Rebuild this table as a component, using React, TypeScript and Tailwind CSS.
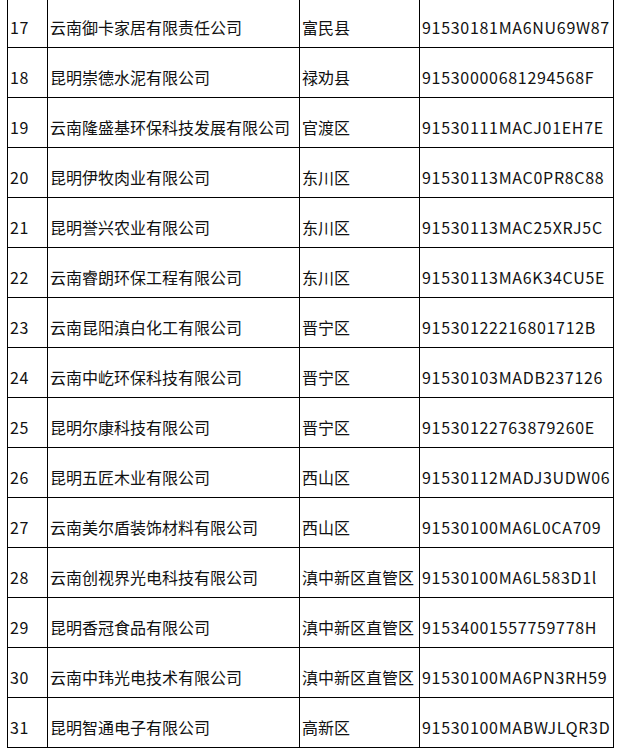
const rows: [string, string, string, string][] = [
  ["17", "云南御卡家居有限责任公司", "富民县", "91530181MA6NU69W87"],
  ["18", "昆明崇德水泥有限公司", "禄劝县", "91530000681294568F"],
  ["19", "云南隆盛基环保科技发展有限公司", "官渡区", "91530111MACJ01EH7E"],
  ["20", "昆明伊牧肉业有限公司", "东川区", "91530113MAC0PR8C88"],
  ["21", "昆明誉兴农业有限公司", "东川区", "91530113MAC25XRJ5C"],
  ["22", "云南睿朗环保工程有限公司", "东川区", "91530113MA6K34CU5E"],
  ["23", "云南昆阳滇白化工有限公司", "晋宁区", "91530122216801712B"],
  ["24", "云南中屹环保科技有限公司", "晋宁区", "91530103MADB237126"],
  ["25", "昆明尔康科技有限公司", "晋宁区", "91530122763879260E"],
  ["26", "昆明五匠木业有限公司", "西山区", "91530112MADJ3UDW06"],
  ["27", "云南美尔盾装饰材料有限公司", "西山区", "91530100MA6L0CA709"],
  ["28", "云南创视界光电科技有限公司", "滇中新区直管区", "91530100MA6L583D1l"],
  ["29", "昆明香冠食品有限公司", "滇中新区直管区", "91534001557759778H"],
  ["30", "云南中玮光电技术有限公司", "滇中新区直管区", "91530100MA6PN3RH59"],
  ["31", "昆明智通电子有限公司", "高新区", "91530100MABWJLQR3D"],
];

const cell = "h-[50px] border-l border-t border-black pl-[2px] pt-[17px] leading-[24px] whitespace-nowrap overflow-hidden";

export default function App() {
  return (
    <div className="w-[622px] h-[755px] overflow-hidden bg-white pl-[7px] font-['Microsoft_YaHei','Noto_Sans_CJK_SC',sans-serif] text-[16px] text-[#111]">
      <div className="-mt-[3px] grid w-[607px] grid-cols-[40px_252px_120px_194px] border-b border-r border-black">
        {rows.map((r) => (
          <div key={r[0]} className="contents">
            <div className={`${cell} tracking-[0.5px]`}>{r[0]}</div>
            <div className={cell}>{r[1]}</div>
            <div className={cell}>{r[2]}</div>
            <div className={`${cell} tracking-[0.7px]`}>{r[3]}</div>
          </div>
        ))}
      </div>
    </div>
  );
}
